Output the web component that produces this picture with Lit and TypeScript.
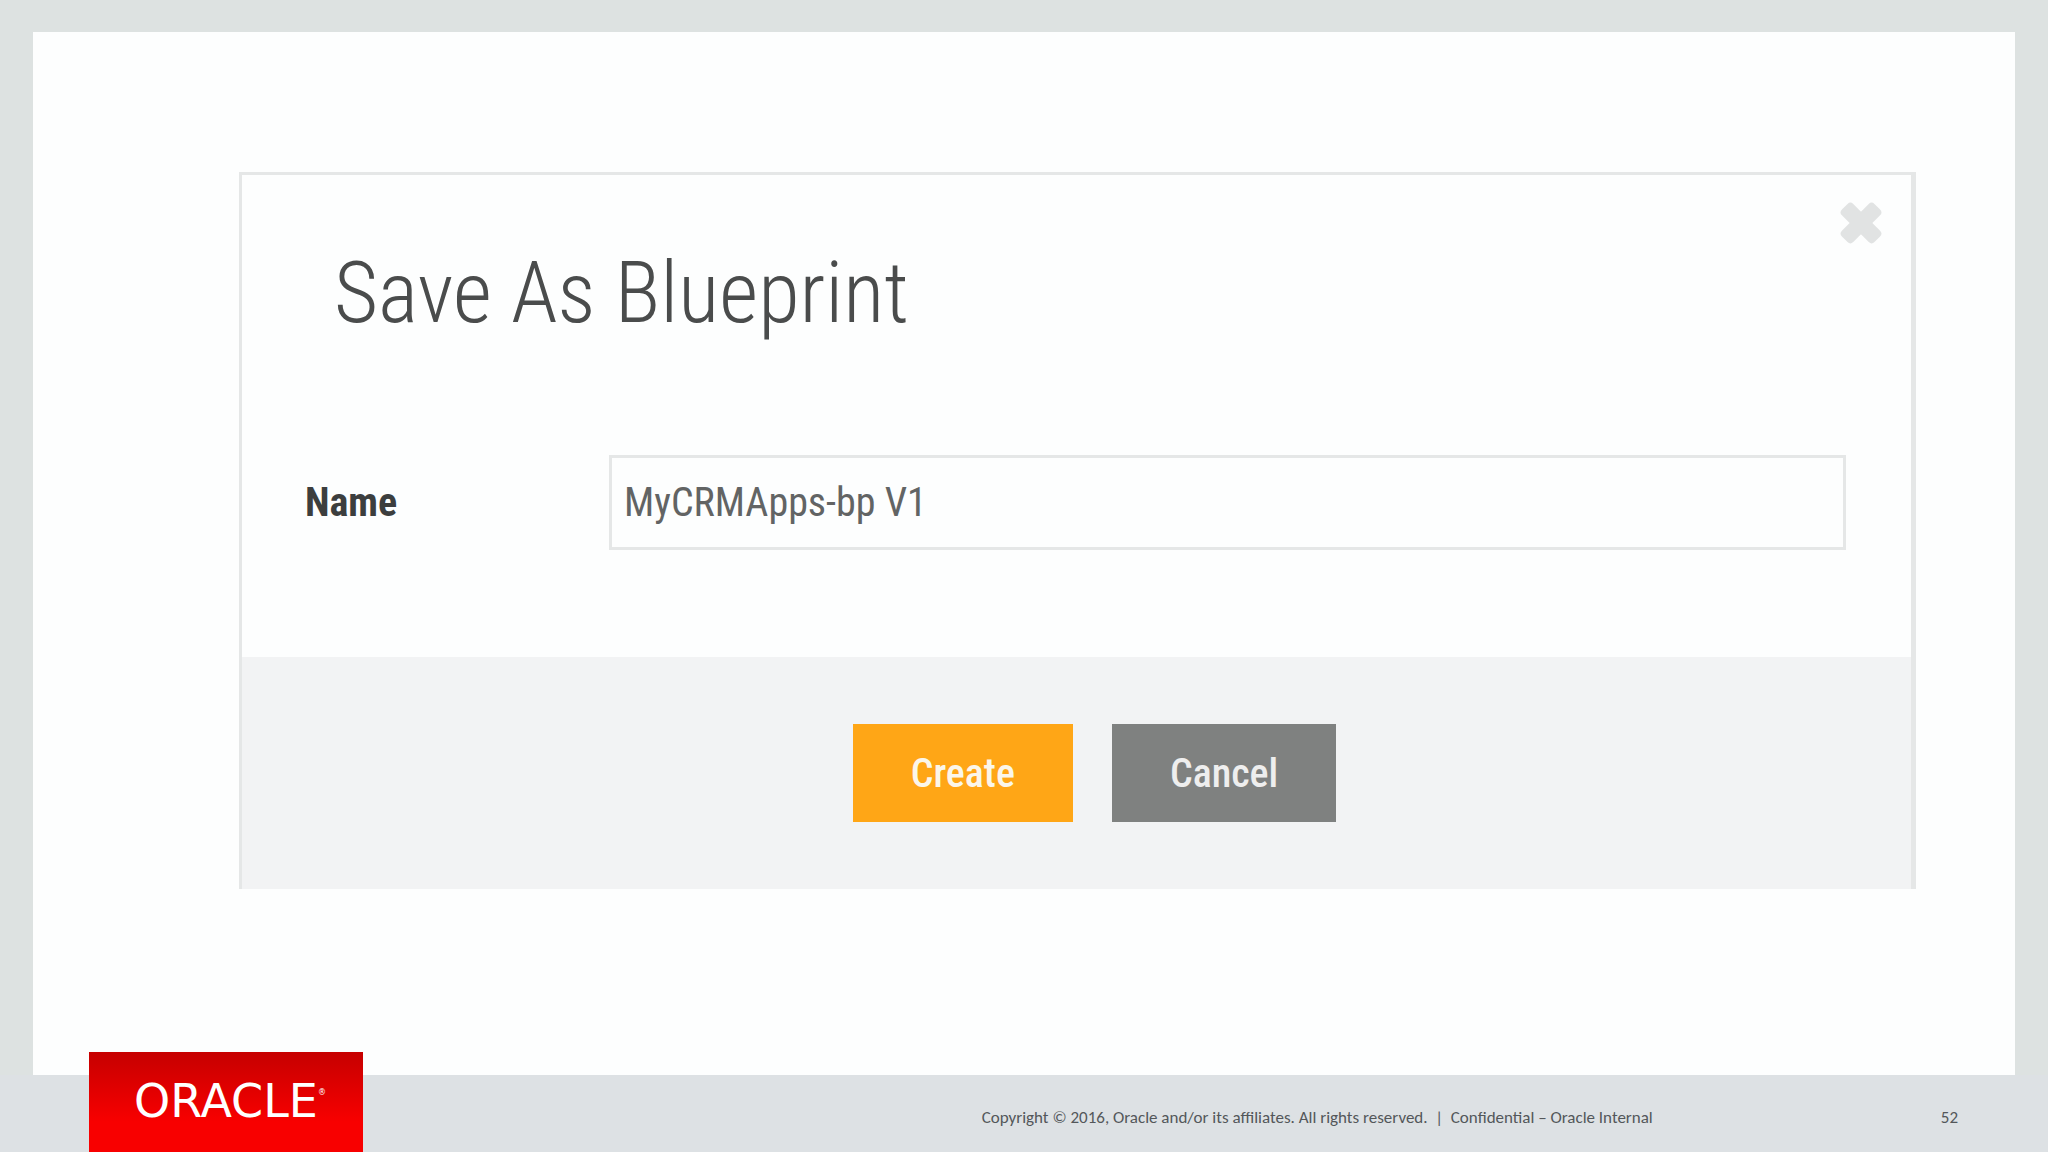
import { LitElement, html, css } from "lit";
import { customElement, state } from "lit/decorators.js";

@customElement("app-root")
export class AppRoot extends LitElement {
  static styles = css`
    :host {
      display: block;
      --narrow: "Roboto Condensed", "Liberation Sans Narrow", "Arial Narrow", sans-serif;
    }
    * {
      box-sizing: border-box;
    }
    .slide {
      display: flex;
      flex-direction: column;
      min-height: 100vh;
      background: #dde2e1;
    }
    .page {
      flex: 1;
      margin: 32px 33px 0;
      padding: 140px 99px 0 206px;
      background: #fdfefe;
    }
    .dialog {
      border: 3px solid #e5e7e7;
      border-right-width: 5px;
      border-bottom: 0;
      background: #fdfefe;
      font-family: var(--narrow);
    }
    .head {
      display: flex;
      justify-content: space-between;
      align-items: flex-start;
      padding: 27px 28px 0 92px;
    }
    .title {
      margin: 35px 0 0;
      font-size: 85px;
      line-height: 112px;
      font-weight: 300;
      color: #4a4c4c;
    }
    .close {
      width: 44px;
      height: 42px;
      padding: 0;
      border: 0;
      background: none;
      cursor: pointer;
    }
    .close svg {
      display: block;
      fill: #e1e3e3;
    }
    .row {
      display: grid;
      grid-template-columns: 304px 1fr;
      align-items: center;
      padding: 106px 65px 107px 63px;
    }
    .label {
      font-size: 40px;
      font-weight: 700;
      color: #3c3e3e;
    }
    .field {
      width: 100%;
      height: 95px;
      padding: 0 12px;
      border: 3px solid #e5e7e7;
      border-radius: 0;
      outline: 0;
      background: #fdfefe;
      font-family: inherit;
      font-size: 40px;
      color: #626464;
    }
    .actions {
      display: flex;
      justify-content: center;
      gap: 39px;
      padding: 67px 0 67px 36px;
      background: #f2f3f4;
    }
    .btn {
      height: 98px;
      padding: 0 58px;
      border: 0;
      font-family: inherit;
      font-size: 40px;
      font-weight: 500;
      color: #fbf6ea;
      cursor: pointer;
    }
    .create {
      background: #ffa616;
    }
    .cancel {
      background: #7f8180;
      color: #eeeeee;
    }
    .foot {
      display: flex;
      align-items: flex-end;
      height: 77px;
      padding: 0 90px 0 89px;
      background: #dde1e4;
      font-family: Carlito, Calibri, Lato, sans-serif;
      font-size: 17px;
      line-height: 20px;
      color: #53575a;
    }
    .brand {
      display: flex;
      flex: none;
      justify-content: center;
      width: 274px;
      height: 100px;
      padding: 25px 0 0 8px;
      background: linear-gradient(#c60000, #f80000 70%);
      color: #ffffff;
      font-family: "DejaVu Sans", sans-serif;
      font-size: 46px;
      line-height: 48px;
      text-decoration: none;
    }
    .mark {
      font-size: 8px;
      line-height: 32px;
    }
    .legal {
      flex: 1;
      margin: 0 288px 24px 0;
      text-align: right;
      white-space: pre;
    }
    .number {
      margin-bottom: 24px;
    }
  `;

  @state() private name = "MyCRMApps-bp V1";

  render() {
    return html`
      <div class="slide">
        <main class="page">
          <form class="dialog" role="dialog" aria-labelledby="title" @submit=${(e: Event) => e.preventDefault()}>
            <div class="head">
              <h1 class="title" id="title">Save As Blueprint</h1>
              <button class="close" type="button" aria-label="Close">
                <svg width="44" height="42" viewBox="0 0 44 42" aria-hidden="true">
                  <rect x="-1" y="13" width="46" height="16" rx="4" transform="rotate(45 22 21)" />
                  <rect x="-1" y="13" width="46" height="16" rx="4" transform="rotate(-45 22 21)" />
                </svg>
              </button>
            </div>
            <div class="row">
              <label class="label" for="name">Name</label>
              <input
                class="field"
                id="name"
                type="text"
                .value=${this.name}
                @input=${(e: Event) => (this.name = (e.target as HTMLInputElement).value)}
              />
            </div>
            <div class="actions">
              <button class="btn create" type="submit">Create</button>
              <button class="btn cancel" type="button">Cancel</button>
            </div>
          </form>
        </main>
        <footer class="foot">
          <a class="brand" href="#">ORACLE<span class="mark">®</span></a>
          <p class="legal">Copyright © 2016, Oracle and/or its affiliates. All rights reserved.  |  Confidential – Oracle Internal</p>
          <span class="number">52</span>
        </footer>
      </div>
    `;
  }
}
